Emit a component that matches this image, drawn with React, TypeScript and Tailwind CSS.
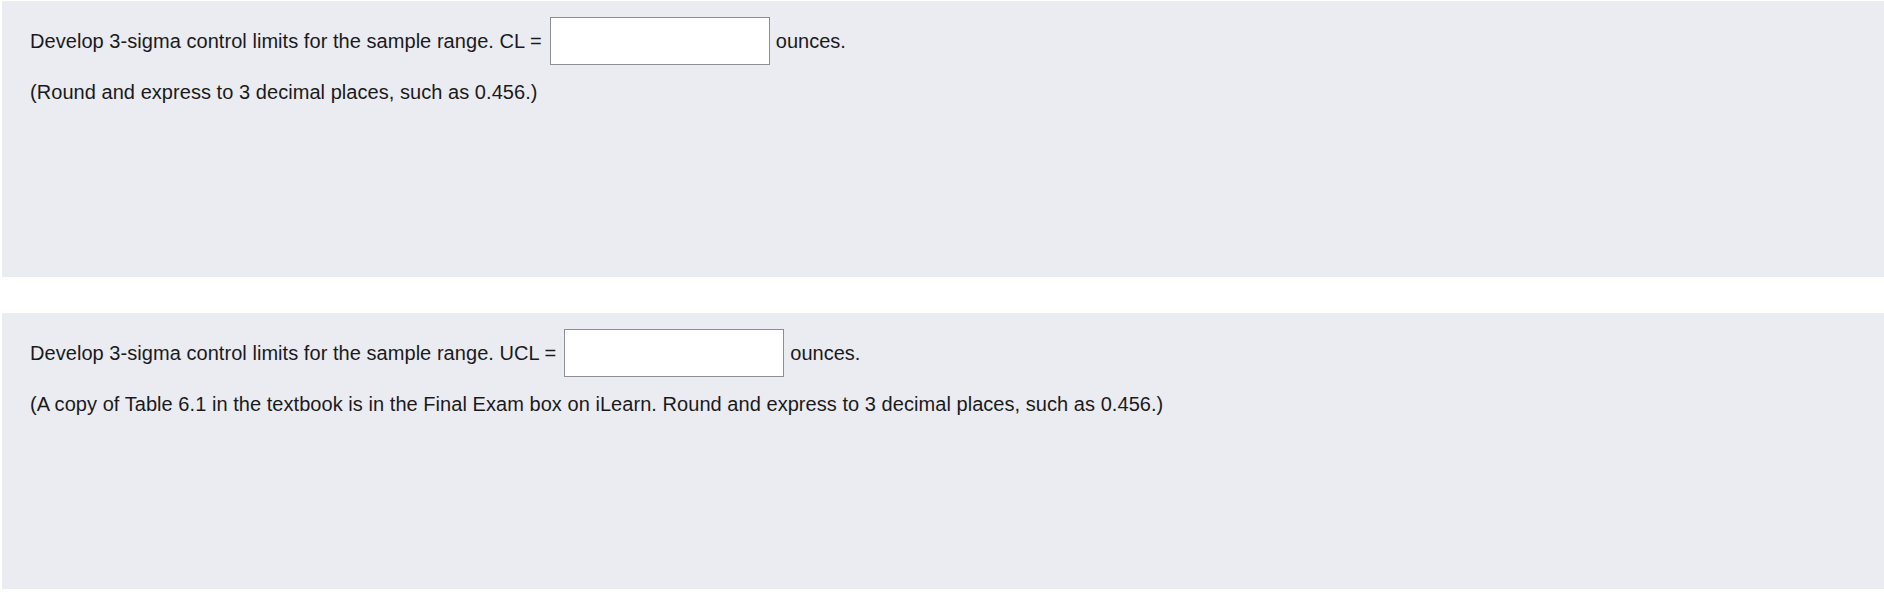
import React from 'react';

interface QuestionProps {
  label: string;
  note: string;
}

const Question: React.FC<QuestionProps> = ({ label, note }) => (
  <div className="h-[276px] bg-[#ebecf1] pl-[28px] pt-4">
    <div className="flex items-center">
      <span className="tracking-[0.05px]">{label} =</span>
      <input
        type="text"
        className="ml-[8px] h-12 w-[220px] border border-[#8e8e98] bg-white outline-none"
      />
      <span className="ml-[6px]">ounces.</span>
    </div>
    <p className="mt-[12px] tracking-[0.05px]">{note}</p>
  </div>
);

export default function App() {
  return (
    <div className="bg-white pl-[2px] pt-[1px] text-[20px] text-[#1a1a1c] [font-family:'Liberation_Sans',Arial,sans-serif]">
      <Question
        label="Develop 3-sigma control limits for the sample range. CL"
        note="(Round and express to 3 decimal places, such as 0.456.)"
      />
      <div className="h-9" />
      <Question
        label="Develop 3-sigma control limits for the sample range. UCL"
        note="(A copy of Table 6.1 in the textbook is in the Final Exam box on iLearn. Round and express to 3 decimal places, such as 0.456.)"
      />
    </div>
  );
}
